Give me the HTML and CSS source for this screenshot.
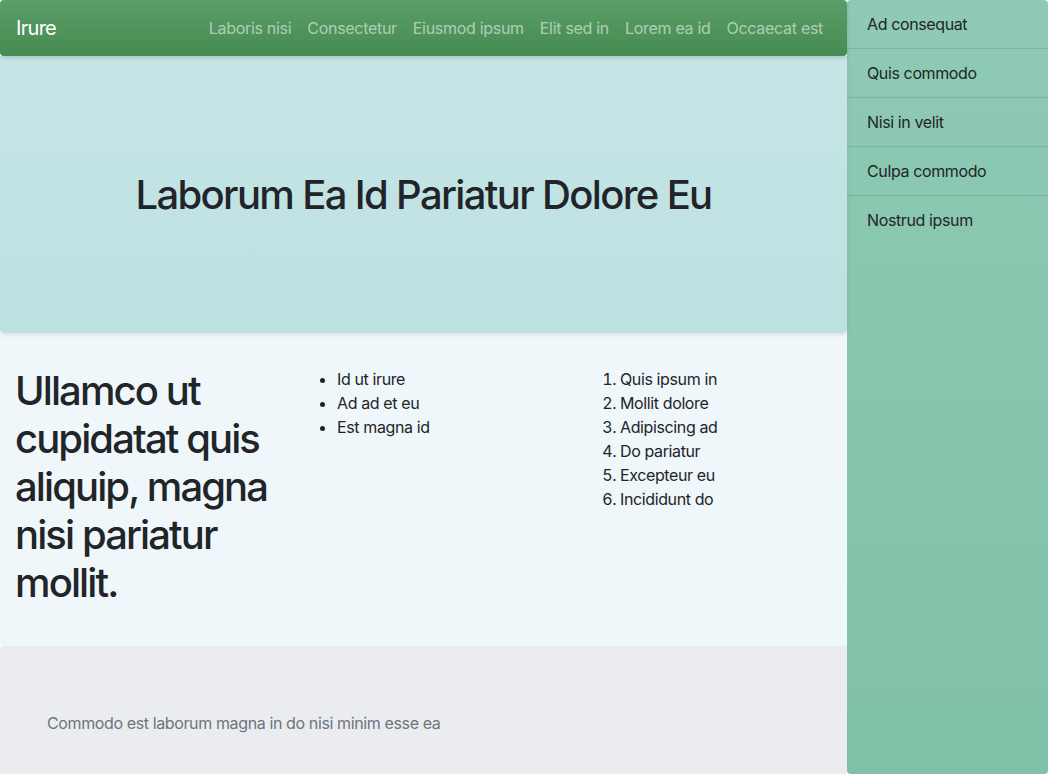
FILE: index.html
```html
<!DOCTYPE html>
<html lang="en">
<head>
<meta charset="utf-8">
<title>Irure</title>
<link rel="stylesheet" href="styles.css">
</head>
<body>
<div class="page">
  <main class="main">
    <nav class="navbar">
      <a class="brand" href="#">Irure</a>
      <ul class="nav">
        <li><a href="#">Laboris nisi</a></li>
        <li><a href="#">Consectetur</a></li>
        <li><a href="#">Eiusmod ipsum</a></li>
        <li><a href="#">Elit sed in</a></li>
        <li><a href="#">Lorem ea id</a></li>
        <li><a href="#">Occaecat est</a></li>
      </ul>
    </nav>
    <header class="hero">
      <h1>Laborum Ea Id Pariatur Dolore Eu</h1>
    </header>
    <section class="content">
      <h2>Ullamco ut cupidatat quis aliquip, magna nisi pariatur mollit.</h2>
      <ul class="list">
        <li>Id ut irure</li>
        <li>Ad ad et eu</li>
        <li>Est magna id</li>
      </ul>
      <ol class="list">
        <li>Quis ipsum in</li>
        <li>Mollit dolore</li>
        <li>Adipiscing ad</li>
        <li>Do pariatur</li>
        <li>Excepteur eu</li>
        <li>Incididunt do</li>
      </ol>
    </section>
    <footer class="footer">
      <p>Commodo est laborum magna in do nisi minim esse ea</p>
    </footer>
  </main>
  <aside class="sidebar">
    <a class="side-item" href="#">Ad consequat</a>
    <a class="side-item" href="#">Quis commodo</a>
    <a class="side-item" href="#">Nisi in velit</a>
    <a class="side-item" href="#">Culpa commodo</a>
    <a class="side-item" href="#">Nostrud ipsum</a>
  </aside>
</div>
</body>
</html>
```

FILE: styles.css
```css
* { box-sizing: border-box; }
html, body {
  margin: 0;
  padding: 0;
  background: #ffffff;
}
body {
  font-family: Inter, "Noto Sans", "Liberation Sans", sans-serif;
  font-size: 16px;
  line-height: 1.5;
  color: #212529;
  letter-spacing: -0.38px;
}
.page {
  display: flex;
  min-height: 100vh;
}
.main {
  flex: 0 0 847px;
  width: 847px;
  display: flex;
  flex-direction: column;
}
.navbar {
  height: 56px;
  display: flex;
  align-items: center;
  justify-content: space-between;
  padding: 0 16px;
  background: linear-gradient(180deg, #5b9e69 0%, #468b51 100%);
  border-radius: 4px;
  box-shadow: 0 2px 4px rgba(0,0,0,0.15);
  position: relative;
  z-index: 3;
}
.brand {
  color: #ffffff;
  font-size: 20px;
  text-decoration: none;
  line-height: 30px;
  letter-spacing: -0.7px;
}
.nav {
  display: flex;
  list-style: none;
  margin: 0;
  padding: 0;
}
.nav a {
  display: block;
  padding: 8px;
  color: rgba(255,255,255,0.55);
  text-decoration: none;
  letter-spacing: -0.3px;
}
.hero {
  height: 277px;
  display: flex;
  align-items: center;
  justify-content: center;
  background: linear-gradient(180deg, #c7e5e6 0%, #bce1e1 100%);
  border-radius: 0 0 4px 4px;
  box-shadow: 0 2px 4px rgba(0,0,0,0.08);
  position: relative;
  z-index: 2;
}
.hero h1 {
  margin: 0;
  font-size: 40px;
  font-weight: 500;
  line-height: 1.2;
  letter-spacing: -1.65px;
}
.content {
  background: #eff7fa;
  display: grid;
  grid-template-columns: 289px 283px 1fr;
  padding: 34px 16px 32px 16px;
  align-items: start;
}
.content h2 {
  margin: 0 0 7px -1px;
  font-size: 40px;
  font-weight: 500;
  line-height: 48px;
  padding-right: 10px;
  letter-spacing: -1.9px;
}
.list {
  margin: 0;
  padding-left: 32px;
}
.footer {
  flex: 1;
  background: #ebecf0;
  border-radius: 4px 0 0 0;
  padding: 65px 47px 32px;
  color: #6c757d;
}
.footer p {
  margin: 0;
}
.sidebar {
  flex: 1;
  display: flex;
  flex-direction: column;
  background: linear-gradient(180deg, #8fcab4 0%, #7fc1a6 100%);
  border-radius: 4px;
  min-height: 100vh;
}
.side-item {
  display: block;
  height: 49px;
  padding: 12px 20px;
  color: #212529;
  text-decoration: none;
  border-bottom: 1px solid rgba(0,0,0,0.1);
}
.side-item:last-child {
  border-bottom: none;
}
```
